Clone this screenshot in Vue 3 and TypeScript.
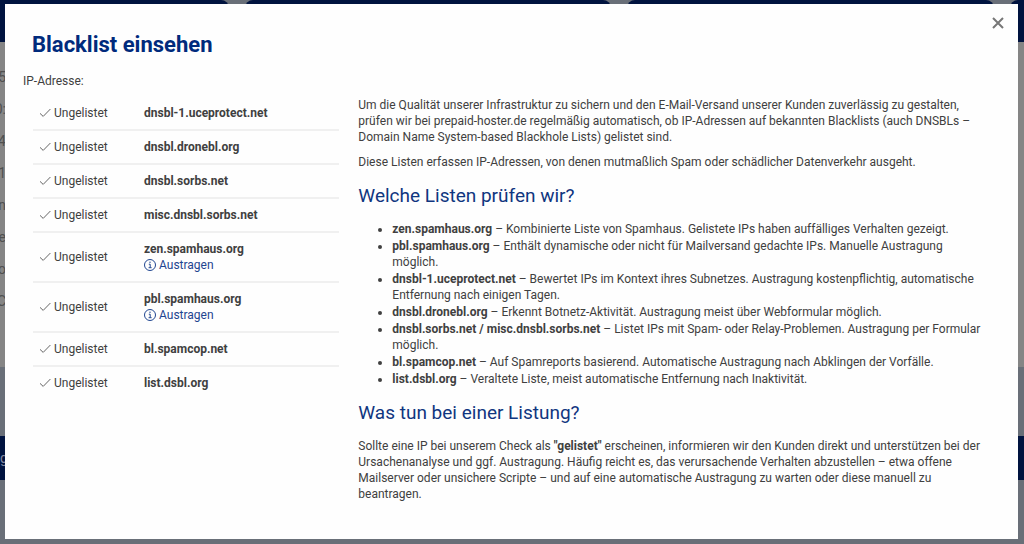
<script setup lang="ts">
interface Blacklist {
  host: string
  removable?: boolean
}

interface ListInfo {
  name: string
  text: string
}

const ipAddress = ''

const blacklists: Blacklist[] = [
  { host: 'dnsbl-1.uceprotect.net' },
  { host: 'dnsbl.dronebl.org' },
  { host: 'dnsbl.sorbs.net' },
  { host: 'misc.dnsbl.sorbs.net' },
  { host: 'zen.spamhaus.org', removable: true },
  { host: 'pbl.spamhaus.org', removable: true },
  { host: 'bl.spamcop.net' },
  { host: 'list.dsbl.org' },
]

const infos: ListInfo[] = [
  { name: 'zen.spamhaus.org', text: 'Kombinierte Liste von Spamhaus. Gelistete IPs haben auffälliges Verhalten gezeigt.' },
  { name: 'pbl.spamhaus.org', text: 'Enthält dynamische oder nicht für Mailversand gedachte IPs. Manuelle Austragung möglich.' },
  { name: 'dnsbl-1.uceprotect.net', text: 'Bewertet IPs im Kontext ihres Subnetzes. Austragung kostenpflichtig, automatische Entfernung nach einigen Tagen.' },
  { name: 'dnsbl.dronebl.org', text: 'Erkennt Botnetz-Aktivität. Austragung meist über Webformular möglich.' },
  { name: 'dnsbl.sorbs.net / misc.dnsbl.sorbs.net', text: 'Listet IPs mit Spam- oder Relay-Problemen. Austragung per Formular möglich.' },
  { name: 'bl.spamcop.net', text: 'Auf Spamreports basierend. Automatische Austragung nach Abklingen der Vorfälle.' },
  { name: 'list.dsbl.org', text: 'Veraltete Liste, meist automatische Entfernung nach Inaktivität.' },
]

const coveredValues: string[] = ['5', '0:', '-4', '1', 'n', 'e', 'o', 'C']
</script>

<template>
  <div class="screen">
    <div class="page" aria-hidden="true">
      <div class="cards">
        <div v-for="n in 4" :key="n" class="card">
          <div class="card-head"></div>
          <div class="card-body">
            <template v-if="n === 1">
              <span v-for="value in coveredValues" :key="value" class="value">{{ value }}</span>
            </template>
          </div>
        </div>
      </div>
      <div class="band">g</div>
    </div>

    <section class="dialog" role="dialog" aria-modal="true" aria-labelledby="dialog-title">
      <button class="close" type="button" aria-label="Schließen">
        <svg viewBox="0 0 12 12" width="12" height="12"><path d="M1 1l10 10M11 1L1 11" /></svg>
      </button>
      <h1 id="dialog-title">Blacklist einsehen</h1>
      <p class="address">IP-Adresse: {{ ipAddress }}</p>

      <div class="columns">
        <table>
          <tbody>
            <tr v-for="entry in blacklists" :key="entry.host">
              <td class="state">
                <span class="with-icon">
                  <svg class="check" viewBox="0 0 12 12" width="12" height="12"><path d="M1 6.4L4.2 9.4L11.4 2" /></svg>
                  Ungelistet
                </span>
              </td>
              <th scope="row">
                {{ entry.host }}
                <a v-if="entry.removable" href="#" class="with-icon">
                  <svg class="info" viewBox="0 0 12 12" width="12" height="12">
                    <circle cx="6" cy="6" r="5.5" />
                    <path d="M4.8 5.2H6.2V8.6M4.6 8.7H7.6" />
                    <circle class="dot" cx="6" cy="3.3" r="0.7" />
                  </svg>
                  Austragen
                </a>
              </th>
            </tr>
          </tbody>
        </table>

        <div class="text">
          <p>Um die Qualität unserer Infrastruktur zu sichern und den E-Mail-Versand unserer Kunden zuverlässig zu gestalten, prüfen wir bei prepaid-hoster.de regelmäßig automatisch, ob IP-Adressen auf bekannten Blacklists (auch DNSBLs – Domain Name System-based Blackhole Lists) gelistet sind.</p>
          <p>Diese Listen erfassen IP-Adressen, von denen mutmaßlich Spam oder schädlicher Datenverkehr ausgeht.</p>
          <h2>Welche Listen prüfen wir?</h2>
          <ul>
            <li v-for="info in infos" :key="info.name"><strong>{{ info.name }}</strong> – {{ info.text }}</li>
          </ul>
          <h2>Was tun bei einer Listung?</h2>
          <p>Sollte eine IP bei unserem Check als <strong>"gelistet"</strong> erscheinen, informieren wir den Kunden direkt und unterstützen bei der Ursachenanalyse und ggf. Austragung. Häufig reicht es, das verursachende Verhalten abzustellen – etwa offene Mailserver oder unsichere Scripte – und auf eine automatische Austragung zu warten oder diese manuell zu beantragen.</p>
        </div>
      </div>
    </section>
  </div>
</template>

<style>
body {
  margin: 0;
}
</style>

<style scoped>
.screen {
  position: relative;
  box-sizing: border-box;
  display: flex;
  min-height: 100vh;
  padding: 4px 6px 5px 5px;
  overflow: hidden;
  background: #696f78;
  color: #404040;
  font: 12px/16px Roboto, "Liberation Sans", sans-serif;
}

.page {
  position: absolute;
  inset: 0;
  overflow: hidden;
}

.cards {
  display: grid;
  grid-template-columns: 229fr 367fr 367fr 14fr;
  gap: 16px;
}

.card {
  min-width: 0;
}

.card-head {
  height: 42px;
  border-radius: 8px 8px 0 0;
  background: #00133f;
}

.card:first-child .card-head {
  border-top-left-radius: 0;
}

.card:last-child .card-head {
  border-top-right-radius: 0;
}

.card-body {
  box-sizing: border-box;
  height: 325px;
  padding-top: 19px;
  background: #858585;
  color: #505050;
  font-size: 14px;
}

.value {
  display: flex;
  justify-content: flex-end;
  width: 6px;
  height: 32px;
  line-height: 32px;
}

.band {
  height: 44px;
  margin-top: 69px;
  background: #00133f;
  color: #8088a0;
  font-size: 14px;
  line-height: 44px;
}

.dialog {
  position: relative;
  box-sizing: border-box;
  flex: 1;
  min-width: 0;
  padding: 27px 27px 20px 18px;
  background: #fefefe;
}

.close {
  position: absolute;
  top: 12px;
  right: 13px;
  display: flex;
  padding: 1px;
  border: 0;
  background: none;
  cursor: pointer;
}

.close svg {
  fill: none;
  stroke: #777;
  stroke-width: 2;
}

h1 {
  margin: 0 0 14px 9px;
  color: #002a7c;
  font-size: 22px;
  font-weight: 700;
  line-height: 28px;
}

p {
  margin: 0 0 9px;
}

.address {
  margin: 0;
}

.columns {
  display: grid;
  grid-template-columns: 306fr 632fr;
  align-items: start;
  gap: 19px;
  margin: 8px 0 0 10px;
}

table {
  width: 100%;
  border-collapse: collapse;
}

tr + tr {
  border-top: 2px solid #f0f0f0;
}

td,
th {
  padding: 8px 6px;
  text-align: left;
  vertical-align: middle;
}

.state {
  width: 93px;
}

.with-icon {
  display: flex;
  align-items: center;
  gap: 3px;
}

svg {
  flex: none;
  fill: none;
  stroke: currentColor;
  stroke-width: 1;
}

.check {
  stroke: #666;
}

.dot {
  fill: currentColor;
  stroke: none;
}

a {
  color: #1f4590;
  font-weight: 400;
  text-decoration: none;
}

h2 {
  margin: 14px 0 13px;
  color: #103680;
  font-size: 19px;
  font-weight: 400;
  line-height: 24px;
}

ul {
  margin: 0;
  padding-left: 34px;
}

li + li {
  margin-top: 1px;
}
</style>
